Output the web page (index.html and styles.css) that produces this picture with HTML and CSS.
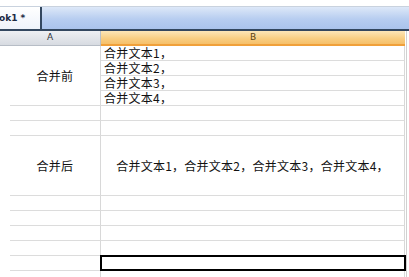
FILE: index.html
```html
<!DOCTYPE html>
<html lang="zh">
<head>
  <meta charset="UTF-8" />
  <title>Book1</title>
  <link rel="stylesheet" href="styles.css">
</head>
<body>
  <div class="tabbar">
    <div class="tab">ok1 *</div>
  </div>
  <div class="sheet">
    <div class="head head-a">A</div>
    <div class="head head-b">B</div>

    <div class="cell merged-4 center">合并前</div>
    <div class="cell text">合并文本1，</div>
    <div class="cell text">合并文本2，</div>
    <div class="cell text">合并文本3，</div>
    <div class="cell text">合并文本4，</div>

    <div class="cell"></div><div class="cell"></div>
    <div class="cell"></div><div class="cell"></div>

    <div class="cell merged-4 center">合并后</div>
    <div class="cell merged-4 center">合并文本1，合并文本2，合并文本3，合并文本4，</div>

    <div class="cell"></div><div class="cell"></div>
    <div class="cell"></div><div class="cell"></div>
    <div class="cell"></div><div class="cell"></div>
    <div class="cell"></div><div class="cell"></div>
    <div class="cell"></div><div class="cell selected"></div>
    <div class="cell"></div><div class="cell"></div>
  </div>
</body>
</html>
```

FILE: styles.css
```css
body {
    margin: 0;
    background: #fff;
    font-family: "Noto Sans CJK SC", sans-serif;
    overflow: hidden;
}
.tabbar {
    margin-top: 6px;
    height: 22px;
    border-top: 1px solid #c9d2de;
    border-bottom: 2px solid #33475f;
    background: linear-gradient(#dde8f8, #b7cdf0 55%, #aac3ec);
    display: flex;
}
.tab {
    width: 40px;
    border-right: 2px solid #33475f;
    background: linear-gradient(#ffffff, #eef3fb);
    font-family: "DejaVu Sans", sans-serif;
    font-weight: bold;
    font-size: 9px;
    color: #1b2a44;
    line-height: 22px;
    text-indent: -1px;
}
.sheet {
    margin-left: 10px;
    display: grid;
    grid-template-columns: 91px 304px;
    grid-template-rows: 15px;
    grid-auto-rows: 15px;
    width: 396px;
    border-right: 1px solid #d0d0d0;
}
.head {
    box-sizing: border-box;
    font-family: "DejaVu Sans", sans-serif;
    font-size: 9px;
    line-height: 13px;
    text-align: center;
    color: #2e3238;
}
.head-a {
    background: linear-gradient(#eef0f3, #d7dbe1);
    border-right: 1px solid #b9c0c9;
    border-bottom: 1px solid #b7bdc6;
    margin-left: -10px;
}
.head-b {
    background: linear-gradient(#fce6b8, #f8cd80 60%, #f6c06a);
    border-bottom: 2px solid #f0a03a;
    color: #5a4210;
}
.cell {
    box-sizing: border-box;
    border-right: 1px solid #d8d8d8;
    border-bottom: 1px solid #dcdcdc;
    font-size: 12px;
    line-height: 14px;
    letter-spacing: 0.25px;
    color: #111;
    white-space: nowrap;
}
.text {
    padding-left: 3px;
}
.merged-4 {
    grid-row: span 4;
}
.center {
    display: flex;
    align-items: center;
    justify-content: center;
}
.selected {
    border: 2px solid #000;
    margin: -1px -1px 0 -1px;
}
```
